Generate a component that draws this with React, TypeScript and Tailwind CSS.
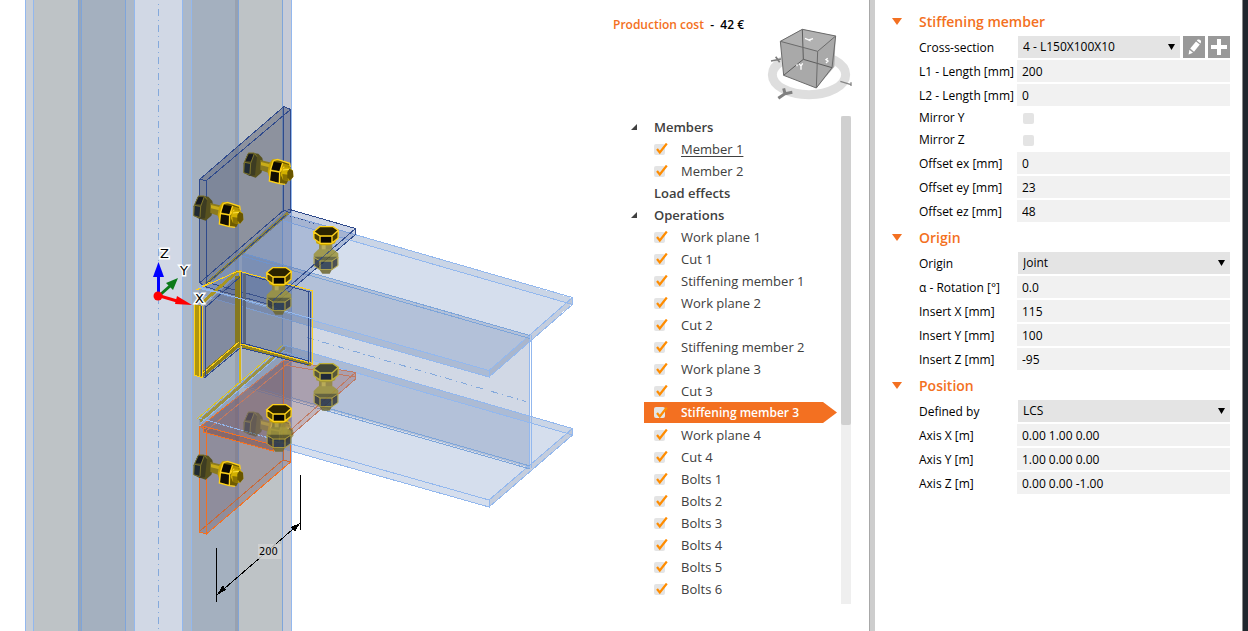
import { useState } from "react";
import type { ReactNode } from "react";

const SKY = "#93b8ee";
const STEEL = "#84a9dc";
const NAVY = "#2f4a8c";
const GOLD = "#ffd21a";
const ORANGE = "#f37021";

function Column() {
  const bands = [
    [25, 8, "#c8ced6"],
    [33, 45, "#bec3c6"],
    [78, 4, "#98a6ba"],
    [82, 43, "#a4b0bf"],
    [125, 9, "#acb8c8"],
    [134, 48, "#d1d8e5"],
    [182, 9, "#acb8c8"],
    [191, 44, "#a4b0bf"],
    [235, 4, "#98a1b0"],
    [239, 43, "#bec3c6"],
    [282, 9, "#c7cbd7"],
  ] as const;
  return (
    <g>
      {bands.map(([x, w, fill]) => (
        <rect key={x} x={x} y={0} width={w} height={631} fill={fill} />
      ))}
      {[25, 33, 134, 182, 191, 291].map((x) => (
        <rect key={x} x={x} y={0} width={1} height={631} fill={SKY} />
      ))}
      {[78, 81, 125, 238, 282].map((x) => (
        <rect key={x} x={x} y={0} width={1} height={631} fill="#7fa5da" />
      ))}
      <line x1={158.5} y1={-7} x2={158.5} y2={631} stroke={STEEL} strokeDasharray="7 4 1 4" />
    </g>
  );
}

function Beam() {
  const flange = "rgba(93,128,186,0.26)";
  return (
    <g>
      <polygon points="242,385 242,253 530,335.5 530,468" fill="rgba(78,105,155,0.26)" />
      <g fill={flange}>
        <polygon points="199,418 284,345 572,428 572,435 489,507 199,425" />
        <polygon points="199,288 284,214 572,298 572,304 489,377 199,294" />
      </g>
      <g fill="rgba(130,140,160,0.2)">
        <polygon points="489,370 572,298 572,304 489,377" />
        <polygon points="489,500 572,428 572,435 489,507" />
      </g>
      <g fill="rgba(120,150,180,0.12)">
        <polygon points="199,288 489,370 489,377 199,294" />
        <polygon points="284,214 572,298 572,304 284,221" />
        <polygon points="284,345 572,428 572,435 284,352" />
      </g>
      <g fill="none" stroke={SKY}>
        <path d="M199 288L489 370.5V377L199 294.5M489 370.5L572.5 297.5V304.5L489 377" />
        <path d="M284 214L572.5 297.5M284 221L572.5 304.5" />
        <path d="M199 418L489 500V507L199 425M489 500L572.5 428.5V435L489 507" />
        <path d="M284 345L572.5 428.5M284 352L572.5 435" />
        <path d="M284 214L199 288M284 345L199 418" />
        <path d="M529.5 336V468M531.5 335V468" />
      </g>
      <g fill="none" stroke="#7da5da">
        <path d="M242 253L530 335.5M242 256L530 338.5M242 383.5L530 466M242 386.5L530 469" />
      </g>
      <path d="M307 337.5L526 401.5" stroke={STEEL} strokeDasharray="7 4 1 4" />
    </g>
  );
}

/* Bolts are drawn on a grid of a third of a scene unit. */
function SideBolt({ x, y, opacity = 1 }: { x: number; y: number; opacity?: number }) {
  return (
    <g transform={`translate(${x} ${y}) scale(0.33333)`} opacity={opacity} strokeWidth={3} shapeRendering="auto">
      <path d="M30 3L46 5L58 18L62 40L55 62L38 77L25 73L18 50Z" fill="#57511f" />
      <path d="M16 3H35L42 14L36 70L20 72L2 62V34Z" fill="#3d3c22" />
      <path d="M14 6L32 7L25 28L6 26Z" fill="#171a20" />
      <path d="M5 32L21 35L20 66L3 62Z" fill="#202a33" />
      <path d="M16 4L4 31L2 62L20 68M34 5L23 34L21 67M4 31L23 34M16 3H34L42 14" fill="none" stroke="#7d742b" />
      <path d="M52 24L86 32V66L52 54Z" fill="#8b7a1e" />
      <path d="M54 30L88 38V48L54 40Z" fill="#c9ac18" />
      <path d="M88 22L104 22L116 40L112 80L98 94L82 88L74 60L78 36Z" fill="#c7a300" />
      <path d="M92 24L114 26L140 34L144 70L130 96L104 94L80 88Z" fill="#6e5b00" />
      <path d="M91 29L117 34L111 58L84 52Z" fill="#0d0a02" />
      <path d="M83 58L110 62L108 93L81 86Z" fill="#120d02" />
      <path d="M119 34L141 40L126 56L111 60Z" fill="#b29200" />
      <path d="M91 26L104 22L140 34L142 46M91 26L82 55L79 87L109 95L126 97M119 33L110 60L109 95M82 55L110 60L124 44" fill="none" stroke={GOLD} strokeWidth={4} />
      <path d="M118 48L140 46L150 56L151 74L141 86L120 84L113 68Z" fill="#d3b000" />
      <path d="M118 66L136 68V86L120 84Z" fill="#8a7200" />
      <path d="M139 50L150 56L151 74L141 86L133 76V60Z" fill="#695600" />
      <path d="M120 54L138 52" stroke="#ffe040" />
    </g>
  );
}

function UprightBolt({ x, y, dim = false }: { x: number; y: number; dim?: boolean }) {
  const edge = dim ? "#c0b13a" : GOLD;
  const top = dim ? "#414638" : "#2b2300";
  const side = dim ? "#56563a" : "#4d4000";
  const front = dim ? "#20293a" : "#080602";
  return (
    <g transform={`translate(${x} ${y}) scale(0.33333)`} strokeWidth={3} shapeRendering="auto">
      <g opacity={0.86}>
        <path d="M18 52H58V86H18Z" fill="#93873c" />
        <path d="M26 54H38V86H26Z" fill="#bdae4c" />
        <path d="M2 84L16 70H60L76 82V96L60 106H16L2 98Z" fill="#9d943c" />
        <path d="M4 92H74V118L56 132H20L4 120Z" fill="#5a5a30" />
        <path d="M6 98L20 105V128L6 119Z" fill="#33383a" />
        <path d="M23 107H56V129H23Z" fill="#27364a" />
        <path d="M58 105L73 96V117L58 128Z" fill="#35383a" />
        <path d="M3 94L21 105V130M3 94V119L21 131H57L75 119V93L57 105H21M57 105V131" fill="none" stroke="#b2a238" />
        <path d="M20 132H56L50 143H28Z" fill="#6e6730" />
      </g>
      <path d="M8 38L70 38L66 52L50 58H26L10 52Z" fill={dim ? "#a4983a" : "#cba800"} />
      <path d="M2 17L20 2H60L76 13L75 37L56 52H22L3 38Z" fill={side} />
      <path d="M2 17L20 2H60L76 13L57 29H21Z" fill={top} />
      <path d="M22 31H56V50H22Z" fill={front} />
      <path d="M2 17L20 2H60L76 13L57 30H21ZM2 17L3 38L22 52H56L75 37L76 13M21 30V52M57 30V52" fill="none" stroke={edge} strokeWidth={4} />
    </g>
  );
}

function UpperAngle() {
  return (
    <g>
      <polygon points="199.5,179 284,107 291,109 291,213 206,286 199.5,283" fill="rgba(74,78,102,0.42)" />
      <polygon points="284,107 291,109 291,213 284,214" fill="rgba(70,90,130,0.15)" />
      <polygon points="206,283 288,209 355.5,228.5 355.5,235 273,305 206,287" fill="rgba(80,105,165,0.3)" />
      <path d="M206 284L288 213" stroke="#8f853c" strokeWidth={3} />
      <g fill="none" stroke={NAVY}>
        <path d="M199.5 179.5L284 106.5L290.5 109.5L206.5 180.5Z" />
        <path d="M199.5 179V283M206.5 180V284M283.5 107V212M290.5 109V213" />
        <path d="M199.5 283L284 210L290.5 213M204 286L286 215" />
        <path d="M288 209L355.5 228.5V234.5L273 305.5V300.5L355.5 228.5M206 282L273 300.5M206 287L273 305.5M200 283L206 287V281" />
        <path d="M290 216L315 224" strokeDasharray="1 3" />
      </g>
    </g>
  );
}

function CornerAngle() {
  return (
    <g>
      <polygon points="203,306 240,274 240,346 203,378" fill="rgba(80,85,115,0.4)" />
      <polygon points="241,272 312,290 312,363 241,346" fill="rgba(85,100,140,0.32)" />
      <path d="M239.5 270V383" stroke="#d9b616" strokeWidth={2} />
      <path d="M237 276V346" stroke="#85781f" strokeWidth={5} />
      <path d="M203 302L238 271" stroke="#a99622" strokeWidth={3} />
      <path d="M202 375L239 344" stroke="#8e7e18" strokeWidth={5} />
      <path d="M202 374L239 342" stroke={GOLD} />
      <polygon points="194,304 203,306 203,378 194,375" fill="#b1960c" />
      <path d="M194.5 304V375M199.5 306V377M202.5 306V377M194 375L203 378" stroke={GOLD} fill="none" />
      <path d="M201.5 306V376M205.5 306V378M204 378L240 348M206 307L240 277M241.5 272V346" stroke={NAVY} fill="none" />
      <path d="M197 290L210 282M196 290L238 271L312 290.5V364L240 344" stroke={GOLD} fill="none" />
      <path d="M242 346L311 365" stroke="#9a871a" strokeWidth={3} />
      <path d="M241 344L311 363" stroke={GOLD} />
      <path d="M244 274L310 292V362M308.5 291V363M242 343L309 361M242 348L309 365" stroke={NAVY} fill="none" />
      <path d="M244.5 274V343" stroke="#59657c" strokeWidth={3} />
      <path d="M199 287L313 319" stroke={SKY} />
    </g>
  );
}

function LowerAngle() {
  return (
    <g>
      <path d="M197 419L283 345" stroke="#dfc31f" />
      <path d="M200 421L285 348" stroke="#9c9143" strokeWidth={3} />
      <path d="M201 423L286 349" stroke={SKY} />
      <polygon points="200,427 284,360 355.5,372.5 355.5,379 273,451 206,432" fill="rgba(150,85,80,0.3)" />
      <polygon points="199.5,427 284,360 291,362 291,462 206.5,534 199.5,532" fill="rgba(105,80,95,0.36)" />
      <polygon points="203,427 273,445 273,451 203,432" fill="rgba(120,60,50,0.3)" />
      <g fill="none" stroke="#c07a62">
        <path d="M200 427L284 360L355.5 372.5V379L273 451M273 445.5L355.5 372.5M206 431L290 362" />
        <path d="M284 365L355 377" />
      </g>
      <g fill="none" stroke="#c96a38">
        <path d="M283.5 361V460L290.5 462M283 460L200 531" />
      </g>
      <g fill="none" stroke={ORANGE}>
        <path d="M199.5 427V532L206.5 534L290.5 462V445M206.5 430V534" />
        <path d="M199 426L206 429M203 426L273 445V451L203 432V426M200 427L230 403" />
      </g>
      <path d="M199 418L290 444" stroke={SKY} strokeDasharray="3 1" />
    </g>
  );
}

function AxisLetter({ x, y, children }: { x: number; y: number; children: string }) {
  return (
    <text x={x} y={y} fill="#000" stroke="#fff" strokeWidth={3} paintOrder="stroke" className="font-['DejaVu_Sans',sans-serif] text-[13px]">
      {children}
    </text>
  );
}

function Scene() {
  return (
    <svg
      viewBox="0 0 600 631"
      preserveAspectRatio="xMinYMin slice"
      shapeRendering="crispEdges"
      className="min-w-0 flex-1"
      role="img"
      aria-label="Steel joint"
    >
      <Column />
      <Beam />
      <LowerAngle />
      <UpperAngle />
      <CornerAngle />
      <SideBolt x={243} y={152} />
      <SideBolt x={193} y={195} />
      <SideBolt x={243} y={411} opacity={0.5} />
      <SideBolt x={193} y={454} />
      <UprightBolt x={313} y={226} />
      <UprightBolt x={266} y={267} />
      <UprightBolt x={313} y={363} dim />
      <UprightBolt x={266} y={404} />
      <path d="M273 300.5L355.5 228.5" stroke={NAVY} strokeOpacity={0.7} />
      <g shapeRendering="auto">
        <path d="M158.5 295V274" stroke="#0000ff" strokeWidth={3} />
        <polygon points="158.5,262 153,277 164,277" fill="#0000ff" />
        <path d="M161 294L170 286" stroke="#0c7a1a" strokeWidth={3} />
        <polygon points="178,278 166,283 173,290" fill="#0c7a1a" />
        <path d="M160 296L177 301" stroke="#f00" strokeWidth={3} />
        <polygon points="192,305 177,296 175,304" fill="#f00" />
        <circle cx={158} cy={296} r={4.5} fill="#f00" />
      </g>
      <AxisLetter x={160} y={258}>Z</AxisLetter>
      <AxisLetter x={180} y={275}>Y</AxisLetter>
      <AxisLetter x={195} y={303}>X</AxisLetter>
      <path d="M216.5 548V602M300.5 475V530M217 595L300 523" stroke="#000" fill="none" />
      <polygon points="217,595 223,585 226,590" fill="#000" />
      <polygon points="300,523 291,527 295,532" fill="#000" />
      <rect x={258} y={544} width={23} height={15} fill="#d2d3d4" fillOpacity={0.85} />
      <text x={259} y={555} className="font-['DejaVu_Sans_Condensed','DejaVu_Sans',sans-serif] text-[11px]">
        200
      </text>
    </svg>
  );
}

function ViewCube() {
  return (
    <svg viewBox="0 0 258 225" className="h-[75px] w-[86px]" role="img" aria-label="View cube">
      <ellipse cx={126} cy={149} rx={110} ry={60} fill="none" stroke="#dedede" strokeWidth={27} />
      <path d="M40 49L106 13L206 33L202 125L148 189L50 151Z" fill="#a9a9a9" />
      <path d="M40 49L106 13L206 33L152 79Z" fill="#b1b1b1" />
      <path d="M106 13L109 103L50 151M109 103L195 128" fill="none" stroke="#5c5c5c" strokeWidth={3} />
      <path d="M40 49L106 13L206 33L152 79ZM40 49L50 151L148 189L195 128L206 33M152 79L148 189" fill="none" stroke="#6b6b6b" strokeWidth={3} />
      <path d="M114 40L126 45L138 41M124 45L131 48" fill="none" stroke="#fff" strokeWidth={4} />
      <path d="M90 118V124M96 116L102 123L107 115M102 123V134M182 100L177 104L183 108L177 114" fill="none" stroke="#fff" strokeWidth={4} />
      <path d="M12 108L42 102M26 95L38 112" stroke="#7d7d7d" strokeWidth={5} />
      <path d="M34 220L54 206L50 190M54 206L76 202" fill="none" stroke="#808080" strokeWidth={9} />
      <path d="M220 169L252 179M252 172V183" stroke="#858585" strokeWidth={4} />
    </svg>
  );
}

const members = ["Member 1", "Member 2"];
const operations = [
  "Work plane 1", "Cut 1", "Stiffening member 1",
  "Work plane 2", "Cut 2", "Stiffening member 2",
  "Work plane 3", "Cut 3", "Stiffening member 3",
  "Work plane 4", "Cut 4",
  "Bolts 1", "Bolts 2", "Bolts 3", "Bolts 4", "Bolts 5", "Bolts 6",
];

function TreeHeading({ label, expandable = true }: { label: string; expandable?: boolean }) {
  return (
    <div className="flex h-[22px] items-center font-semibold">
      <span className="w-[23px]">
        {expandable && (
          <svg viewBox="0 0 6 6" className="size-[6px]" aria-hidden="true">
            <path d="M6 0V6H0Z" fill="#404040" />
          </svg>
        )}
      </span>
      {label}
    </div>
  );
}

function TreeItem({ label, selected = false, current = false }: { label: string; selected?: boolean; current?: boolean }) {
  return (
    <div className="flex h-[22px] items-start pl-[13px]">
      <label
        className={
          selected
            ? "flex h-[21px] w-[193px] items-center bg-[#f37021] pl-[10px] text-[12px] font-semibold text-white [clip-path:polygon(0_0,calc(100%_-_14px)_0,100%_50%,calc(100%_-_14px)_100%,0_100%)]"
            : "flex h-[22px] w-[193px] items-center pl-[10px] font-medium"
        }
      >
        <span className="grid w-[27px] items-center">
          <input type="checkbox" defaultChecked className="peer col-start-1 row-start-1 size-[11px] appearance-none rounded-[2px] bg-[#e4e4e4]" />
          <svg viewBox="0 0 14 12" className="pointer-events-none invisible col-start-1 row-start-1 h-[12px] w-[14px] peer-checked:visible" aria-hidden="true">
            <path d="M3 6L5.8 9.5L12.8 0.5" fill="none" stroke="#ff8c00" strokeWidth={2.2} />
          </svg>
        </span>
        <span className={current ? "underline underline-offset-2" : ""}>{label}</span>
      </label>
    </div>
  );
}

function Tree() {
  return (
    <div className="mr-[18px] ml-[31px] flex h-[488px] justify-between text-[13px] leading-[22px] text-[#404040]">
      <div>
        <TreeHeading label="Members" />
        {members.map((m, i) => (
          <TreeItem key={m} label={m} current={i === 0} />
        ))}
        <TreeHeading label="Load effects" expandable={false} />
        <TreeHeading label="Operations" />
        {operations.map((o) => (
          <TreeItem key={o} label={o} selected={o === "Stiffening member 3"} />
        ))}
      </div>
      <div className="w-[10px] bg-[#efefef]">
        <div className="h-[309px] rounded-[2px] bg-[#d0d0d0]" />
      </div>
    </div>
  );
}

function Section({ title, children }: { title: string; children: ReactNode }) {
  const [open, setOpen] = useState(true);
  return (
    <section>
      <button type="button" aria-expanded={open} onClick={() => setOpen(!open)} className="flex h-[28px] w-full items-center pt-px text-[14px] font-semibold text-[#f37021]">
        <svg viewBox="0 0 10 7" className="mr-[17px] h-[7px] w-[10px]" aria-hidden="true">
          <path d="M0 0H10L5 7Z" fill="#f37021" />
        </svg>
        {title}
      </button>
      {open && <div className="pl-[27px]">{children}</div>}
    </section>
  );
}

function TextRow({ id, label, value }: { id: string; label: string; value: string }) {
  return (
    <div className="flex h-[24px] items-center">
      <label htmlFor={id} className="w-[98px] pt-[2px] whitespace-nowrap">{label}</label>
      <input id={id} type="text" defaultValue={value} className="h-[22px] min-w-0 flex-1 bg-[#f1f1f1] px-[5px] outline-none" />
    </div>
  );
}

function CheckRow({ id, label }: { id: string; label: string }) {
  return (
    <div className="flex h-[22px] items-center">
      <label htmlFor={id} className="w-[104px]">{label}</label>
      <input id={id} type="checkbox" className="size-[11px] appearance-none rounded-[2px] bg-[#e4e4e4] checked:bg-[#f37021]" />
    </div>
  );
}

function SelectRow({ id, label, value, children }: { id: string; label: string; value: string; children?: ReactNode }) {
  return (
    <div className="flex h-[24px] items-center">
      <label htmlFor={id} className="w-[99px] pt-[2px] whitespace-nowrap">{label}</label>
      <div className="grid min-w-0 flex-1 items-center">
        <select id={id} defaultValue={value} className="col-start-1 row-start-1 h-[22px] w-full appearance-none bg-[#e4e4e4] px-[5px] outline-none">
          <option>{value}</option>
        </select>
        <svg viewBox="0 0 7 6" className="pointer-events-none col-start-1 row-start-1 mr-[5px] h-[6px] w-[7px] justify-self-end" aria-hidden="true">
          <path d="M0 0H7L3.5 6Z" fill="#000" />
        </svg>
      </div>
      {children}
    </div>
  );
}

function Properties() {
  return (
    <aside className="w-[367px] shrink-0 bg-white pt-[7px] pr-[12px] pl-[17px] text-[12px] leading-[16px] text-black">
      <Section title="Stiffening member">
        <SelectRow id="cross-section" label="Cross-section" value="4 - L150X100X10">
          <button type="button" aria-label="Edit" className="ml-[3px] flex size-[22px] items-center justify-center bg-[#999999]">
            <svg viewBox="0 0 22 22" className="size-[22px]" aria-hidden="true">
              <path d="M5.6 18.4L6.4 13.8L10 16.8ZM7.2 12.6L13 5.4L16.8 8.4L11 15.8ZM13.8 4.5L14.8 3.4H16.2L18 4.8V6.2L17.4 7.4Z" fill="#fff" />
            </svg>
          </button>
          <button type="button" aria-label="Add" className="ml-[3px] flex size-[22px] items-center justify-center bg-[#999999]">
            <svg viewBox="0 0 22 22" className="size-[22px]" aria-hidden="true">
              <path d="M9 3H13V9H19V13H13V19H9V13H3V9H9Z" fill="#fff" />
            </svg>
          </button>
        </SelectRow>
        <TextRow id="l1" label="L1 - Length [mm]" value="200" />
        <TextRow id="l2" label="L2 - Length [mm]" value="0" />
        <CheckRow id="mirror-y" label="Mirror Y" />
        <CheckRow id="mirror-z" label="Mirror Z" />
        <TextRow id="ex" label="Offset ex [mm]" value="0" />
        <TextRow id="ey" label="Offset ey [mm]" value="23" />
        <TextRow id="ez" label="Offset ez [mm]" value="48" />
      </Section>
      <Section title="Origin">
        <SelectRow id="origin" label="Origin" value="Joint" />
        <TextRow id="rotation" label="α - Rotation [°]" value="0.0" />
        <TextRow id="insert-x" label="Insert X [mm]" value="115" />
        <TextRow id="insert-y" label="Insert Y [mm]" value="100" />
        <TextRow id="insert-z" label="Insert Z [mm]" value="-95" />
      </Section>
      <Section title="Position">
        <SelectRow id="defined-by" label="Defined by" value="LCS" />
        <TextRow id="axis-x" label="Axis X [m]" value="0.00 1.00 0.00" />
        <TextRow id="axis-y" label="Axis Y [m]" value="1.00 0.00 0.00" />
        <TextRow id="axis-z" label="Axis Z [m]" value="0.00 0.00 -1.00" />
      </Section>
    </aside>
  );
}

export default function App() {
  return (
    <div className="flex min-h-screen bg-white font-['Open_Sans','Noto_Sans',sans-serif]">
      <main className="flex min-w-0 flex-1">
        <Scene />
        <div className="w-[269px] shrink-0">
          <div className="flex h-[116px] justify-between pr-[16px] pl-[13px]">
            <p className="pt-[16px] text-[12px] leading-[18px] font-semibold whitespace-pre text-black">
              <span className="text-[#f37021]">Production cost</span>
              {"  -  42 €"}
            </p>
            <div className="pt-[25px]">
              <ViewCube />
            </div>
          </div>
          <Tree />
        </div>
      </main>
      <div className="w-[6px] shrink-0 border-l border-[#a8a8a8] bg-[#cdcdcd]" />
      <Properties />
      <div className="w-[6px] shrink-0 border-l border-[#8a8a8a] bg-[#20262d]" />
    </div>
  );
}
